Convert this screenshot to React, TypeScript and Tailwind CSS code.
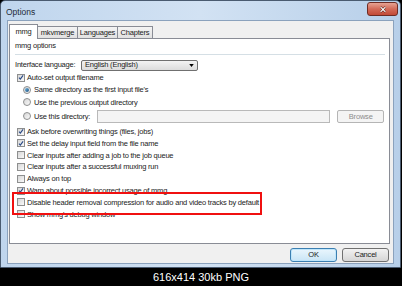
import React from 'react';

const font = { fontFamily: '"Liberation Sans", Arial, sans-serif' };

function Check({ checked }: { checked?: boolean }) {
  return (
    <span className="w-[8px] h-[8px] shrink-0 border border-[#8e8f8f] bg-gradient-to-br from-[#d6d6d6] to-[#fafafa] flex items-center justify-center">
      {checked && (
        <svg viewBox="0 0 8 8" className="w-[7px] h-[7px]">
          <path d="M1.3 4.2 L3.1 6.2 L6.8 1.2" stroke="#2a4a86" strokeWidth="1.5" fill="none" />
        </svg>
      )}
    </span>
  );
}

function Radio({ checked }: { checked?: boolean }) {
  return (
    <span className="w-[8px] h-[8px] shrink-0 rounded-full border border-[#8e8f8f] bg-gradient-to-br from-[#d6d6d6] to-[#fafafa] flex items-center justify-center">
      {checked && <span className="w-[4px] h-[4px] rounded-full bg-gradient-to-br from-[#6fb6e0] to-[#1d5180]" />}
    </span>
  );
}

function CheckRow({ label, checked }: { label: string; checked?: boolean }) {
  return (
    <div className="h-[11.8px] flex items-center gap-[2px] pl-[2px]">
      <Check checked={checked} />
      <span className="leading-none whitespace-nowrap">{label}</span>
    </div>
  );
}

function RadioRow({ label, checked, children }: { label: string; checked?: boolean; children?: React.ReactNode }) {
  return (
    <div className="flex items-center gap-[3px] pl-[8px]">
      <Radio checked={checked} />
      <span className="leading-none whitespace-nowrap">{label}</span>
      {children}
    </div>
  );
}

const tabs = ['mmg', 'mkvmerge', 'Languages', 'Chapters'];
const tabWidths = ['w-[29px]', 'w-[40px]', 'w-[40px]', 'w-[35px]'];

export default function App() {
  return (
    <div className="w-[402px] h-[286px] bg-black flex flex-col text-[7.5px] text-[#1b1b1b] tracking-[-0.2px]" style={font}>
      <div className="w-[401px] h-[268px] rounded-t-[5px] border border-[#4a5b70] bg-gradient-to-r from-[#bfd5ed] via-[#d2e2f3] to-[#b7cfe9] flex flex-col px-[6px] pb-[3px]">
        {/* title bar */}
        <div className="h-[19px] flex items-start justify-between">
          <span className="text-[8.5px] text-[#1e2a38] mt-[5px] -ml-[1px] tracking-normal">Options</span>
          <div className="w-[31px] h-[14px] mt-[1px] -mr-[4px] rounded-[3px] border border-[#6e2c24] bg-gradient-to-b from-[#e6a293] via-[#d36a58] to-[#c24a37] flex items-center justify-center">
            <svg viewBox="0 0 10 8" className="w-[8px] h-[7px]">
              <path d="M2 1 L8 7 M8 1 L2 7" stroke="#5a2018" strokeWidth="2.6" />
              <path d="M2 1 L8 7 M8 1 L2 7" stroke="#ffffff" strokeWidth="1.5" />
            </svg>
          </div>
        </div>
        {/* client */}
        <div className="flex-1 bg-[#f0f0f0] border border-[#8ba2bd] flex flex-col pl-[1px] pr-[3px]">
          {/* tabs */}
          <div className="flex items-end h-[17px] pt-[2px]">
            {tabs.map((t, i) =>
              i === 0 ? (
                <div key={t} className={`${tabWidths[i]} h-[15px] bg-white border border-b-0 border-[#898c95] flex items-center justify-center -mb-[1px] relative z-10`}>
                  {t}
                </div>
              ) : (
                <div key={t} className={`${tabWidths[i]} h-[12px] bg-gradient-to-b from-[#f4f4f4] to-[#e1e1e1] border border-l-0 border-b-0 border-[#898c95] flex items-center justify-center`}>
                  {t}
                </div>
              )
            )}
          </div>
          {/* panel */}
          <div className="h-[206px] bg-white border border-[#898c95] relative flex flex-col pt-[2px] pl-[5px] pr-[4px]">
            <div className="h-[10px] flex items-center">mmg options</div>
            <div className="mt-[3px] h-px bg-[#d5dfe5]" />
            <div className="mt-[4px] h-[12px] flex items-center">
              <span className="w-[66px] whitespace-nowrap">Interface language:</span>
              <div className="w-[117px] h-[11px] rounded-[2px] border border-[#707070] bg-gradient-to-b from-[#f3f3f3] to-[#dcdcdc] flex items-center justify-between pl-[3px] pr-[3px]">
                <span>English (English)</span>
                <svg viewBox="0 0 6 4" className="w-[5px] h-[3px]">
                  <path d="M0 0 H6 L3 4 Z" fill="#000" />
                </svg>
              </div>
            </div>
            <div className="mt-[1px]">
              <CheckRow label="Auto-set output filename" checked />
            </div>
            <div className="h-[12px] flex items-center">
              <RadioRow label="Same directory as the first input file's" checked />
            </div>
            <div className="h-[13px] flex items-center">
              <RadioRow label="Use the previous output directory" />
            </div>
            <div className="h-[15px] flex items-center">
              <RadioRow label="Use this directory:">
                <div className="ml-[4px] w-[233px] h-[13px] shrink-0 border border-[#b9b9b9] bg-[#f4f4f4]" />
                <div className="ml-[4px] w-[47px] h-[13px] shrink-0 rounded-[2px] border border-[#b5b5b5] bg-[#f4f4f4] text-[#8d8d8d] flex items-center justify-center">
                  Browse
                </div>
              </RadioRow>
            </div>
            <div className="mt-[2px]">
              <CheckRow label="Ask before overwriting things (files, jobs)" checked />
              <CheckRow label="Set the delay input field from the file name" checked />
              <CheckRow label="Clear inputs after adding a job to the job queue" />
              <CheckRow label="Clear inputs after a successful muxing run" />
              <CheckRow label="Always on top" />
              <CheckRow label="Warn about possible incorrect usage of mmg" checked />
              <CheckRow label="Disable header removal compression for audio and video tracks by default" />
              <CheckRow label="Show mmg's debug window" />
            </div>
            {/* annotation */}
            <div className="absolute left-[2px] top-[153px] w-[250px] h-[23px] border-2 border-[#f01010]" />
          </div>
          {/* buttons */}
          <div className="flex justify-end gap-[5px] mt-[4px] pr-[1px]">
            <div className="w-[47px] h-[14px] rounded-[3px] border border-[#3c7fb1] bg-gradient-to-b from-[#eaf6fd] to-[#c9e5f6] shadow-[inset_0_0_0_1px_#bfe6fb] flex items-center justify-center">
              OK
            </div>
            <div className="w-[47px] h-[14px] rounded-[3px] border border-[#707070] bg-gradient-to-b from-[#f2f2f2] to-[#d6d6d6] flex items-center justify-center">
              Cancel
            </div>
          </div>
        </div>
      </div>
      <div className="flex-1 flex items-center justify-center text-white text-[11px] tracking-normal pt-[1px]">
        616x414 30kb PNG
      </div>
    </div>
  );
}
